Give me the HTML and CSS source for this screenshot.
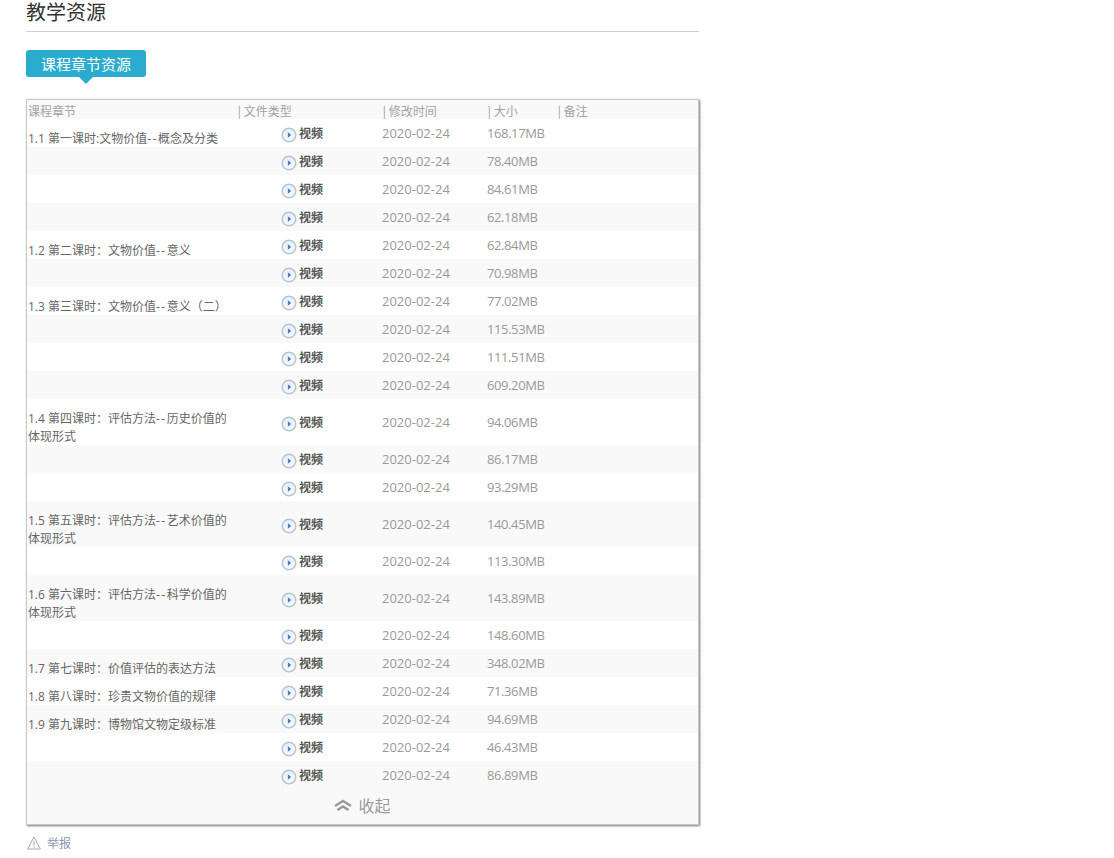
FILE: index.html
```html
<!DOCTYPE html>
<html lang="zh">
<head>
<meta charset="utf-8">
<title>教学资源</title>
<link rel="stylesheet" href="styles.css">
</head>
<body>
<svg class="defs" width="0" height="0" aria-hidden="true">
  <defs>
    <linearGradient id="disc" x1="0" y1="0" x2="0" y2="1">
      <stop offset="0" stop-color="#e6eef7"/>
      <stop offset="1" stop-color="#f8fafd"/>
    </linearGradient>
    <symbol id="play" viewBox="0 0 16 16">
      <circle cx="8" cy="8" r="6.8" fill="url(#disc)" stroke="#b4c6db" stroke-width="1.5"/>
      <path d="M6.9 5.2 L10.2 8 L6.9 10.8 Z" fill="#4a7cb8"/>
    </symbol>
  </defs>
</svg>
<main class="page">
  <h2 class="title">教学资源</h2>
  <div class="tabs"><span class="tab">课程章节资源</span></div>
  <section class="panel">
    <table class="res">
      <colgroup><col class="c1"><col class="c2"><col class="c3"><col class="c4"><col></colgroup>
      <thead>
        <tr>
          <th class="first">课程章节</th>
          <th class="second"><i class="sep red">|</i> 文件类型</th>
          <th><i class="sep blue">|</i> 修改时间</th>
          <th><i class="sep red">|</i> 大小</th>
          <th><i class="sep red">|</i> 备注</th>
        </tr>
      </thead>
      <tbody>
        <tr><td class="ch"><div>1.1 第一课时:文物价值<span class="dd">--</span>概念及分类</div></td><td class="ty"><svg class="ic"><use href="#play"/></svg><b>视频</b></td><td class="da">2020-02-24</td><td class="si">168.17MB</td><td></td></tr>
        <tr><td class="ch"></td><td class="ty"><svg class="ic"><use href="#play"/></svg><b>视频</b></td><td class="da">2020-02-24</td><td class="si">78.40MB</td><td></td></tr>
        <tr><td class="ch"></td><td class="ty"><svg class="ic"><use href="#play"/></svg><b>视频</b></td><td class="da">2020-02-24</td><td class="si">84.61MB</td><td></td></tr>
        <tr><td class="ch"></td><td class="ty"><svg class="ic"><use href="#play"/></svg><b>视频</b></td><td class="da">2020-02-24</td><td class="si">62.18MB</td><td></td></tr>
        <tr><td class="ch"><div>1.2 第二课时：文物价值<span class="dd">--</span>意义</div></td><td class="ty"><svg class="ic"><use href="#play"/></svg><b>视频</b></td><td class="da">2020-02-24</td><td class="si">62.84MB</td><td></td></tr>
        <tr><td class="ch"></td><td class="ty"><svg class="ic"><use href="#play"/></svg><b>视频</b></td><td class="da">2020-02-24</td><td class="si">70.98MB</td><td></td></tr>
        <tr><td class="ch"><div>1.3 第三课时：文物价值<span class="dd">--</span>意义（二）</div></td><td class="ty"><svg class="ic"><use href="#play"/></svg><b>视频</b></td><td class="da">2020-02-24</td><td class="si">77.02MB</td><td></td></tr>
        <tr><td class="ch"></td><td class="ty"><svg class="ic"><use href="#play"/></svg><b>视频</b></td><td class="da">2020-02-24</td><td class="si">115.53MB</td><td></td></tr>
        <tr><td class="ch"></td><td class="ty"><svg class="ic"><use href="#play"/></svg><b>视频</b></td><td class="da">2020-02-24</td><td class="si">111.51MB</td><td></td></tr>
        <tr><td class="ch"></td><td class="ty"><svg class="ic"><use href="#play"/></svg><b>视频</b></td><td class="da">2020-02-24</td><td class="si">609.20MB</td><td></td></tr>
        <tr><td class="ch"><div>1.4 第四课时：评估方法<span class="dd">--</span>历史价值的<br>体现形式</div></td><td class="ty"><svg class="ic"><use href="#play"/></svg><b>视频</b></td><td class="da">2020-02-24</td><td class="si">94.06MB</td><td></td></tr>
        <tr><td class="ch"></td><td class="ty"><svg class="ic"><use href="#play"/></svg><b>视频</b></td><td class="da">2020-02-24</td><td class="si">86.17MB</td><td></td></tr>
        <tr><td class="ch"></td><td class="ty"><svg class="ic"><use href="#play"/></svg><b>视频</b></td><td class="da">2020-02-24</td><td class="si">93.29MB</td><td></td></tr>
        <tr class="shade"><td class="ch"><div>1.5 第五课时：评估方法<span class="dd">--</span>艺术价值的<br>体现形式</div></td><td class="ty"><svg class="ic"><use href="#play"/></svg><b>视频</b></td><td class="da">2020-02-24</td><td class="si">140.45MB</td><td></td></tr>
        <tr class="plain"><td class="ch"></td><td class="ty"><svg class="ic"><use href="#play"/></svg><b>视频</b></td><td class="da">2020-02-24</td><td class="si">113.30MB</td><td></td></tr>
        <tr class="shade"><td class="ch"><div>1.6 第六课时：评估方法<span class="dd">--</span>科学价值的<br>体现形式</div></td><td class="ty"><svg class="ic"><use href="#play"/></svg><b>视频</b></td><td class="da">2020-02-24</td><td class="si">143.89MB</td><td></td></tr>
        <tr class="plain"><td class="ch"></td><td class="ty"><svg class="ic"><use href="#play"/></svg><b>视频</b></td><td class="da">2020-02-24</td><td class="si">148.60MB</td><td></td></tr>
        <tr class="shade"><td class="ch"><div>1.7 第七课时：价值评估的表达方法</div></td><td class="ty"><svg class="ic"><use href="#play"/></svg><b>视频</b></td><td class="da">2020-02-24</td><td class="si">348.02MB</td><td></td></tr>
        <tr class="plain"><td class="ch"><div>1.8 第八课时：珍贵文物价值的规律</div></td><td class="ty"><svg class="ic"><use href="#play"/></svg><b>视频</b></td><td class="da">2020-02-24</td><td class="si">71.36MB</td><td></td></tr>
        <tr class="shade"><td class="ch"><div>1.9 第九课时：博物馆文物定级标准</div></td><td class="ty"><svg class="ic"><use href="#play"/></svg><b>视频</b></td><td class="da">2020-02-24</td><td class="si">94.69MB</td><td></td></tr>
        <tr class="plain"><td class="ch"></td><td class="ty"><svg class="ic"><use href="#play"/></svg><b>视频</b></td><td class="da">2020-02-24</td><td class="si">46.43MB</td><td></td></tr>
        <tr class="shade"><td class="ch"></td><td class="ty"><svg class="ic"><use href="#play"/></svg><b>视频</b></td><td class="da">2020-02-24</td><td class="si">86.89MB</td><td></td></tr>
      </tbody>
    </table>
    <div class="fold">
      <svg class="chev" viewBox="0 0 18 12" aria-hidden="true"><path d="M1 7 L9 2 L17 7 M3.5 11 L9 7.5 L14.5 11" fill="none" stroke="#9a9a9a" stroke-width="2.4"/></svg>
      <span>收起</span>
    </div>
  </section>
  <div class="report">
    <svg class="warn" viewBox="0 0 14 14" aria-hidden="true"><path d="M7 1 L13.4 13 H0.6 Z" fill="none" stroke="#a3a9b2"/><path d="M7 5 V9.6 M7 10.4 V11.8" stroke="#a3a9b2"/></svg>
    <a class="rp-link">举报</a>
  </div>
</main>
</body>
</html>
```

FILE: styles.css
```css
html, body { margin: 0; padding: 0; background: #fff; }
body { font-family: "Open Sans", "Noto Sans CJK SC", sans-serif; color: #666; }
.defs { position: absolute; }
.page { width: 673px; margin-left: 26px; }
.title {
  margin: 0;
  height: 31px;
  border-bottom: 1px solid #d0d0d0;
  font-size: 20px;
  font-weight: 400;
  line-height: 26px;
  color: #333;
}
.tabs { margin-top: 18px; height: 27px; }
.tab {
  position: relative;
  display: block;
  width: 120px;
  height: 27px;
  border-radius: 3px;
  background: #2bacce;
  color: #fff;
  font-size: 15px;
  line-height: 29px;
  text-align: center;
}
.tab::after {
  content: "";
  position: absolute;
  left: 53px;
  top: 27px;
  border: 7px solid transparent;
  border-top-color: #2bacce;
  border-bottom-width: 0;
}
.panel {
  margin-top: 22px;
  width: 671px;
  border: 1px solid #c8c8c8;
  box-shadow: 1px 1px 2px #777;
  background: #f9f9f9;
}
.res { width: 671px; border-collapse: collapse; table-layout: fixed; }
.c1 { width: 211px; }
.c2 { width: 144px; }
.c3 { width: 105px; }
.c4 { width: 70px; }
th {
  height: 19px;
  padding: 4px 0 0 1px;
  box-sizing: border-box;
  background: #f9f9f9;
  font-size: 12px;
  font-weight: 400;
  line-height: 15px;
  text-align: left;
  color: #a3a3a3;
}
th.second { padding-left: 0; }
.sep { font-style: normal; margin: 0 -2px; }
.red { color: #b89a9c; }
.blue { color: #8fa0b0; }
td { padding: 0; height: 28px; }
tbody tr:nth-child(odd) td { background: #fff; }
tbody tr:nth-child(even) td { background: #f9f9f9; }
tbody tr.shade td { background: #f9f9f9; }
tbody tr.plain td { background: #fff; }
.ch {
  padding: 11px 10px 0 1px;
  font-size: 12px;
  line-height: 18px;
  color: #666;
  vertical-align: top;
  box-sizing: border-box;
}
.ch:empty { padding: 0; }
.ch div { margin-bottom: -1px; }
.dd { letter-spacing: 1.5px; }
.ty { padding-left: 43px; font-size: 12px; vertical-align: middle; white-space: nowrap; color: #555; }
.ty b { vertical-align: 2px; margin-left: 1px; position: relative; top: 1px; }
.ic { width: 16px; height: 16px; margin-right: 1px; vertical-align: -3px; position: relative; top: 1px; }
.da, .si { font-size: 13px; color: #999; vertical-align: middle; }
.si { letter-spacing: -0.4px; }
.fold {
  height: 35px;
  box-sizing: border-box;
  padding-bottom: 4px;
  display: flex;
  align-items: center;
  justify-content: center;
  gap: 6px;
  font-size: 16px;
  color: #999;
}
.chev { width: 18px; height: 12px; }
.report { margin-top: 9px; display: flex; align-items: center; gap: 6px; height: 18px; padding-left: 1px; }
.warn { width: 14px; height: 14px; }
.rp-link { font-size: 12px; color: #8a97b0; }
```
